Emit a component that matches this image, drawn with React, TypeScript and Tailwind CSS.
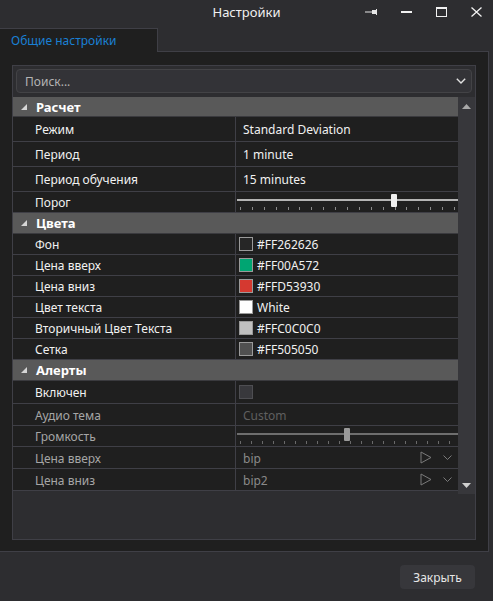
import React from "react"

type Row =
  | { kind: "cat"; label: string; h: number }
  | { kind: "text"; label: string; value: string; h: number; dim?: boolean }
  | { kind: "slider"; label: string; h: number; pos: number; dim?: boolean }
  | { kind: "color"; label: string; value: string; swatch: string; h: number }
  | { kind: "check"; label: string; h: number }
  | { kind: "sound"; label: string; value: string; h: number }

const rows: Row[] = [
  { kind: "cat", label: "Расчет", h: 20 },
  { kind: "text", label: "Режим", value: "Standard Deviation", h: 25 },
  { kind: "text", label: "Период", value: "1 minute", h: 25 },
  { kind: "text", label: "Период обучения", value: "15 minutes", h: 25 },
  { kind: "slider", label: "Порог", h: 21, pos: 155 },
  { kind: "cat", label: "Цвета", h: 21 },
  { kind: "color", label: "Фон", value: "#FF262626", swatch: "bg-[#262626]", h: 21 },
  { kind: "color", label: "Цена вверх", value: "#FF00A572", swatch: "bg-[#00a572]", h: 21 },
  { kind: "color", label: "Цена вниз", value: "#FFD53930", swatch: "bg-[#d53930]", h: 21 },
  { kind: "color", label: "Цвет текста", value: "White", swatch: "bg-white", h: 21 },
  { kind: "color", label: "Вторичный Цвет Текста", value: "#FFC0C0C0", swatch: "bg-[#c0c0c0]", h: 21 },
  { kind: "color", label: "Сетка", value: "#FF505050", swatch: "bg-[#505050]", h: 21 },
  { kind: "cat", label: "Алерты", h: 21 },
  { kind: "check", label: "Включен", h: 23 },
  { kind: "text", label: "Аудио тема", value: "Custom", h: 22, dim: true },
  { kind: "slider", label: "Громкость", h: 21, pos: 108, dim: true },
  { kind: "sound", label: "Цена вверх", value: "bip", h: 22 },
  { kind: "sound", label: "Цена вниз", value: "bip2", h: 22 },
]

function Ticks({ step, color }: { step: number; color: string }) {
  const n = Math.floor(216 / step) + 1
  return (
    <div className="flex px-[3px]" style={{ gap: step - 1 }}>
      {Array.from({ length: n }).map((_, i) => (
        <div key={i} className={`h-[3px] w-px ${color}`} />
      ))}
    </div>
  )
}

function Slider({ pos, dim }: { pos: number; dim?: boolean }) {
  return (
    <div className="relative h-full w-full overflow-hidden pl-px">
      <div className={`mt-[7px] h-[2px] w-full ${dim ? "bg-[#6e6e6e]" : "bg-[#b4b4b4]"}`} />
      <div className="mt-[6px]">
        <Ticks step={dim ? 11 : 12} color={dim ? "bg-[#6a6a6a]" : "bg-[#8a8a8a]"} />
      </div>
      {/* thumb */}
      <div
        className={`absolute top-[2px] h-[13px] w-[6px] rounded-[1px] ${dim ? "bg-[#9a9a9a]" : "bg-[#f0f0f0]"}`}
        style={{ left: pos }}
      />
    </div>
  )
}

function Triangle() {
  return (
    <svg width="6" height="6" viewBox="0 0 6 6" className="mr-[9px]">
      <polygon points="6,0 6,6 0,6" fill="#d6d6d6" />
    </svg>
  )
}

function PropRow({ row }: { row: Row }) {
  if (row.kind === "cat") {
    return (
      <div
        className="flex items-center border-b border-[#3a3a3e] bg-[#595959] pl-[8px] text-[13px] font-bold text-white"
        style={{ height: row.h }}
      >
        <Triangle />
        <span className="pt-[2px]">{row.label}</span>
      </div>
    )
  }
  const dimLabel = row.kind === "sound" || (row.kind !== "check" && "dim" in row && row.dim)
  return (
    <div className="flex border-b border-[#3f3f46] bg-[#1f1f1f]" style={{ height: row.h }}>
      <div
        className={`flex w-[223px] shrink-0 items-center border-r border-[#3f3f46] pt-[2px] pl-[22px] ${
          dimLabel ? "text-[#a6a6a6]" : "text-[#f1f1f1]"
        }`}
      >
        {row.label}
      </div>
      <div className="flex min-w-0 flex-1 items-center">
        {row.kind === "text" && (
          <span className={`pt-[2px] pl-[7px] ${row.dim ? "text-[#5f5f5f]" : "text-[#f1f1f1]"}`}>{row.value}</span>
        )}
        {row.kind === "slider" && <Slider pos={row.pos} dim={row.dim} />}
        {row.kind === "color" && (
          <div className="flex items-center gap-[4px] pl-[3px] text-[#f1f1f1]">
            <div className={`h-[14px] w-[14px] border border-[#9a9a9a] ${row.swatch}`} />
            <span className="pt-px">{row.value}</span>
          </div>
        )}
        {row.kind === "check" && (
          <div className="ml-[3px] h-[14px] w-[14px] border border-[#4e4e52] bg-[#38383c]" />
        )}
        {row.kind === "sound" && (
          <div className="flex w-full items-center pl-[7px] text-[#8a8a8a]">
            <span className="flex-1 pt-[2px]">{row.value}</span>
            <svg width="12" height="13" viewBox="0 0 12 13" className="mr-[11px]">
              <polygon points="1,1 11,6.5 1,12" fill="none" stroke="#7a7a7a" strokeWidth="1" />
            </svg>
            <svg width="9" height="5" viewBox="0 0 9 5" className="mr-[6px]">
              <polyline points="0.5,0.5 4.5,4.5 8.5,0.5" fill="none" stroke="#7a7a7a" strokeWidth="1" />
            </svg>
          </div>
        )}
      </div>
    </div>
  )
}

export default function App() {
  return (
    <div className="flex h-[601px] w-[493px] flex-col bg-[#2d2d30] font-['Noto_Sans',sans-serif] text-[12px] text-[#f1f1f1]">
      {/* Title bar */}
      <div className="grid h-[28px] shrink-0 grid-cols-[1fr_auto_1fr] items-center">
        <div />
        <div className="pb-[2px] text-[13px] text-[#f1f1f1]">Настройки</div>
        <div className="flex items-center justify-end gap-[24px] pr-[11px] pb-[4px]">
          <svg width="12" height="6" viewBox="0 0 12 6">
            <rect x="0" y="2.5" width="8" height="1" fill="#e6e6e6" />
            <rect x="7" y="1" width="4" height="4" fill="#e6e6e6" />
            <rect x="11" y="0" width="1" height="6" fill="#e6e6e6" />
          </svg>
          <svg width="11" height="10" viewBox="0 0 11 10">
            <rect x="0" y="4" width="11" height="2" fill="#f1f1f1" />
          </svg>
          <svg width="11" height="10" viewBox="0 0 11 10">
            <rect x="0.5" y="0.5" width="10" height="9" fill="none" stroke="#f1f1f1" strokeWidth="1" />
            <rect x="0" y="0" width="11" height="2" fill="#f1f1f1" />
          </svg>
          <svg width="11" height="10" viewBox="0 0 11 10">
            <path d="M0.5 0.5 L10.5 9.5 M10.5 0.5 L0.5 9.5" stroke="#f1f1f1" strokeWidth="1.3" />
          </svg>
        </div>
      </div>

      {/* Tab strip */}
      <div className="flex h-[24px] w-[489px] shrink-0">
        <div className="flex w-[158px] items-center border-t border-r border-[#3f3f46] bg-[#1f1f1f] pt-px pl-[11px] text-[#1a7fd4]">
          Общие настройки
        </div>
        <div className="flex-1 border-b border-[#3f3f46]" />
      </div>

      {/* Tab content */}
      <div className="h-[500px] w-[489px] shrink-0 border-r border-b border-[#3f3f46] bg-[#1f1f1f] px-[12px] pt-[13px]">
        <div className="flex h-[475px] flex-col border border-[#3f3f46] bg-[#2d2d30]">
          <div className="px-[3px] pt-[3px]">
            <div className="flex h-[24px] items-center rounded-[4px] border border-[#434346] bg-[#333337] pl-[8px] pr-[5px] text-[#b4b4b4]">
              <span className="flex-1 pt-px">Поиск...</span>
              <svg width="10" height="6" viewBox="0 0 10 6">
                <polyline points="0.8,0.8 5,5 9.2,0.8" fill="none" stroke="#e0e0e0" strokeWidth="1.4" />
              </svg>
            </div>
          </div>
          <div className="mt-[4px] flex h-[397px]">
            <div className="min-w-0 flex-1">
              {rows.map((r, i) => (
                <PropRow key={i} row={r} />
              ))}
            </div>
            {/* scrollbar */}
            <div className="flex w-[17px] shrink-0 flex-col items-center justify-between bg-[#37373b] pt-[7px] pb-[6px]">
              <svg width="9" height="5" viewBox="0 0 9 5">
                <polygon points="4.5,0 9,5 0,5" fill="#a8a8a8" />
              </svg>
              <svg width="9" height="5" viewBox="0 0 9 5">
                <polygon points="0,0 9,0 4.5,5" fill="#d0d0d0" />
              </svg>
            </div>
          </div>
        </div>
      </div>

      {/* Footer */}
      <div className="flex justify-end pt-[13px] pr-[18px]">
        <button className="h-[24px] w-[75px] rounded-[4px] bg-[#37373b] pt-px text-[#e6e6e6]">Закрыть</button>
      </div>
    </div>
  )
}
